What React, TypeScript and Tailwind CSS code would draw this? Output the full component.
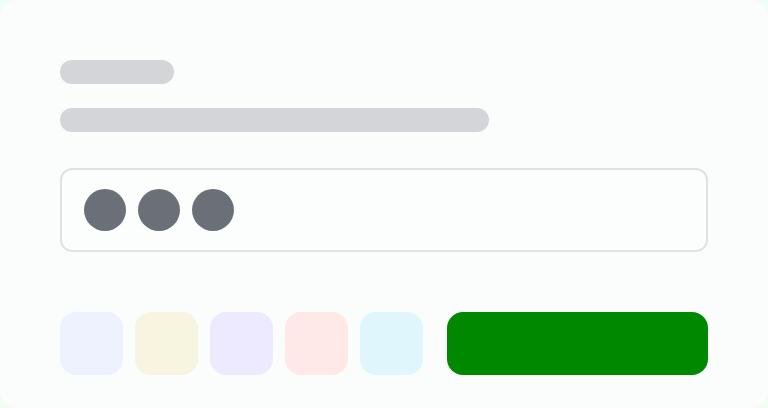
const swatches = ["bg-[#eef2ff]", "bg-[#f7f4df]", "bg-[#ede9fe]", "bg-[#fee8e8]", "bg-[#dff6fc]"];

export default function App() {
  return (
    <div className="w-[768px] h-[408px] bg-[#f0fdf4]">
      <div className="w-full h-full rounded-2xl bg-[#fbfdfc] px-[60px] pt-[60px] flex flex-col">
        <div className="w-[114px] h-6 rounded-full bg-[#d4d5d9]" />
        <div className="w-[429px] h-6 rounded-full bg-[#d4d5d9] mt-6" />
        <div className="mt-9 h-[84px] rounded-xl border-2 border-[#e1e2e5] bg-[#fcfdfd] flex items-center gap-3 px-[22px]">
          {[0, 1, 2].map((i) => (
            <span key={i} className="w-[42px] h-[42px] rounded-full bg-[#6b7078]" />
          ))}
        </div>
        <div className="mt-[60px] flex items-center">
          <div className="flex gap-3">
            {swatches.map((c) => (
              <div key={c} className={`w-[63px] h-[63px] rounded-2xl ${c}`} />
            ))}
          </div>
          <button className="ml-6 flex-1 h-[63px] rounded-2xl bg-[#008800]" />
        </div>
      </div>
    </div>
  );
}
